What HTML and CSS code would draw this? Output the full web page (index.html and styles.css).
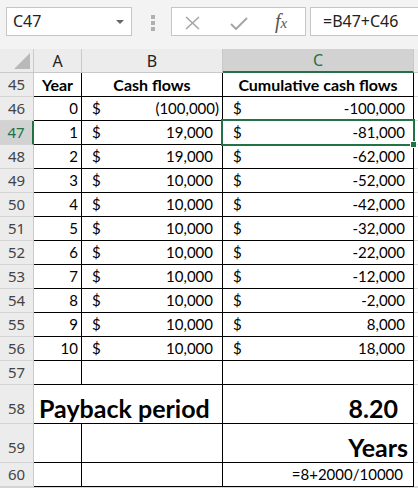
FILE: index.html
```html
<!DOCTYPE html>
<html lang="en">
<head>
    <meta charset="UTF-8">
    <title>Payback period</title>
    <link rel="stylesheet" href="styles.css">
</head>
<body>
    <div class="toolbar">
        <div class="namebox">C47<span class="caret"></span></div>
        <div class="grip"><i></i><i></i><i></i></div>
        <div class="fbtns">
            <svg class="ico-x" width="15" height="14" viewBox="0 0 15 14"><path d="M1 1L14 13M14 1L1 13" stroke="#a6a6a6" stroke-width="1.6" fill="none"/></svg>
            <svg class="ico-ok" width="18" height="13" viewBox="0 0 18 13"><path d="M1 7L6 12L17 1" stroke="#a6a6a6" stroke-width="2" fill="none"/></svg>
            <span class="fx">f<small>x</small></span>
        </div>
        <div class="formula">=B47+C46</div>
    </div>

    <table class="sheet">
        <colgroup>
            <col class="c-row"><col class="c-a"><col class="c-b"><col class="c-c"><col>
        </colgroup>
        <thead>
            <tr><th class="corner"><span class="tri"></span></th><th>A</th><th>B</th><th class="on">C</th><th class="last"></th></tr>
        </thead>
        <tbody>
            <tr><th>45</th><td class="hd">Year</td><td class="hd">Cash flows</td><td class="hd cl">Cumulative cash flows</td><td class="d"></td></tr>
            <tr><th>46</th><td class="yr">0</td><td class="cf"><span class="cur">$</span><span class="neg">(100,000)</span></td><td class="cum cl"><span class="cur">$</span>-100,000</td><td class="d"></td></tr>
            <tr><th class="on">47</th><td class="yr">1</td><td class="cf"><span class="cur">$</span>19,000</td><td class="cum cl active"><span class="cur">$</span>-81,000<span class="selbox"><span class="handle"></span></span></td><td class="d"></td></tr>
            <tr><th>48</th><td class="yr">2</td><td class="cf"><span class="cur">$</span>19,000</td><td class="cum cl"><span class="cur">$</span>-62,000</td><td class="d"></td></tr>
            <tr><th>49</th><td class="yr">3</td><td class="cf"><span class="cur">$</span>10,000</td><td class="cum cl"><span class="cur">$</span>-52,000</td><td class="d"></td></tr>
            <tr><th>50</th><td class="yr">4</td><td class="cf"><span class="cur">$</span>10,000</td><td class="cum cl"><span class="cur">$</span>-42,000</td><td class="d"></td></tr>
            <tr><th>51</th><td class="yr">5</td><td class="cf"><span class="cur">$</span>10,000</td><td class="cum cl"><span class="cur">$</span>-32,000</td><td class="d"></td></tr>
            <tr><th>52</th><td class="yr">6</td><td class="cf"><span class="cur">$</span>10,000</td><td class="cum cl"><span class="cur">$</span>-22,000</td><td class="d"></td></tr>
            <tr><th>53</th><td class="yr">7</td><td class="cf"><span class="cur">$</span>10,000</td><td class="cum cl"><span class="cur">$</span>-12,000</td><td class="d"></td></tr>
            <tr><th>54</th><td class="yr">8</td><td class="cf"><span class="cur">$</span>10,000</td><td class="cum cl"><span class="cur">$</span>-2,000</td><td class="d"></td></tr>
            <tr><th>55</th><td class="yr">9</td><td class="cf"><span class="cur">$</span>10,000</td><td class="cum cl"><span class="cur">$</span>8,000</td><td class="d"></td></tr>
            <tr><th>56</th><td class="yr">10</td><td class="cf"><span class="cur">$</span>10,000</td><td class="cum cl"><span class="cur">$</span>18,000</td><td class="d"></td></tr>
            <tr><th>57</th><td></td><td></td><td class="cl"></td><td class="d"></td></tr>
            <tr class="tall"><th>58</th><td class="big" colspan="2">Payback period</td><td class="big num cl">8.20</td><td class="d"></td></tr>
            <tr class="tall"><th>59</th><td></td><td></td><td class="big yrs cl">Years</td><td class="d"></td></tr>
            <tr><th>60</th><td></td><td></td><td class="note cl">=8+2000/10000</td><td class="d"></td></tr>
            <tr><th></th><td class="blank"></td><td class="blank"></td><td class="blank"></td><td class="d"></td></tr>
        </tbody>
    </table>
</body>
</html>
```

FILE: styles.css
```css
body { margin: 0; background: #fff; font-family: "Noto Sans", sans-serif; overflow: hidden; }

.toolbar { display: flex; height: 49px; background: #f3f3f3; box-sizing: border-box; padding-top: 7px; }
.namebox { position: relative; box-sizing: border-box; width: 126px; height: 29px; margin-left: 6px; padding-left: 6px; background: #fff; border: 1px solid #c6c6c6; font-size: 16px; line-height: 26px; color: #222; }
.caret { position: absolute; left: 109px; top: 12px; border-left: 4px solid transparent; border-right: 4px solid transparent; border-top: 4px solid #666; }
.grip { width: 39px; display: flex; flex-direction: column; align-items: center; padding-top: 8px; gap: 2px; box-sizing: border-box; }
.grip i { width: 4px; height: 4px; background: #b0b0b0; margin-left: 3px; }
.fbtns { display: flex; align-items: center; box-sizing: border-box; width: 135px; height: 29px; background: #fff; border: 1px solid #c6c6c6; }
.ico-x { margin-left: 13px; margin-top: 2px; }
.ico-ok { margin-left: 30px; margin-top: 3px; }
.fx { margin-left: 27px; font-family: "Liberation Serif", serif; font-style: italic; font-size: 20px; color: #555; line-height: 20px; }
.fx small { font-size: 15px; }
.formula { flex: 1; box-sizing: border-box; height: 29px; margin-left: 4px; padding-left: 12px; background: #fff; border: 1px solid #c6c6c6; border-right: none; font-size: 16px; line-height: 26px; color: #222; white-space: nowrap; }

.sheet { width: 418px; table-layout: fixed; border-collapse: separate; border-spacing: 0; font-family: Lato, sans-serif; font-size: 15px; color: #000; }
.c-row { width: 34px; }
.c-a { width: 48px; }
.c-b { width: 141px; }
.c-c { width: 191px; }

.sheet th, .sheet td { padding: 0; box-sizing: border-box; white-space: nowrap; overflow: visible; }
.sheet thead th { height: 24px; background: #ececec; border-right: 1px solid #c9c9c9; border-bottom: 1px solid #c9c9c9; font-family: "Noto Sans", sans-serif; font-weight: normal; font-size: 16px; line-height: 22px; color: #222; text-align: center; }
.sheet thead th.on { background: #d2d2d2; color: #217346; border-bottom: 2px solid #217346; line-height: 21px; }
.sheet thead th.last { border-right: none; }
.corner { position: relative; }
.tri { position: absolute; right: 3px; bottom: 3px; border-left: 16px solid transparent; border-bottom: 16px solid #b9b9b9; }

.sheet tbody th { background: #ececec; border-right: 1px solid #c9c9c9; border-bottom: 1px solid #d4d4d4; font-family: "Noto Sans", sans-serif; font-weight: normal; font-size: 15px; color: #444; line-height: 23px; text-align: center; }
.sheet tbody th.on { background: #d2d2d2; color: #217346; border-right: 2px solid #217346; }

.sheet td { line-height: 23px; border-right: 1px solid #000; border-bottom: 1px solid #000; }
.sheet td.d { border-right: none; border-bottom: 1px solid #dadada; }
.sheet td.blank { border-bottom-color: #dadada; border-right-color: #dadada; }

.tall th, .tall td { line-height: 30px !important; padding-top: 8px !important; }

.hd { font-weight: bold; font-size: 16px; text-align: center; }
.yr { text-align: right; padding-right: 3px !important; }
.cf, .cum { text-align: right; }
.cf { padding: 0 9px 0 10px !important; }
.cum { padding: 0 8px 0 10px !important; }
.cur { float: left; }
.neg { margin-right: -6px; }

.active { position: relative; }
.selbox { position: absolute; left: -2px; top: -2px; right: -2px; bottom: -2px; border: 2px solid #217346; }
.handle { position: absolute; right: -4px; bottom: -4px; width: 5px; height: 5px; background: #217346; border: 1px solid #fff; }

.big { font-weight: bold; font-size: 25px; }
td.big[colspan] { padding-left: 5px !important; }
.big.num { text-align: right; padding-right: 15px !important; }
.big.yrs { text-align: right; padding-right: 5px !important; }
.note { text-align: right; padding-right: 10px !important; }
```
